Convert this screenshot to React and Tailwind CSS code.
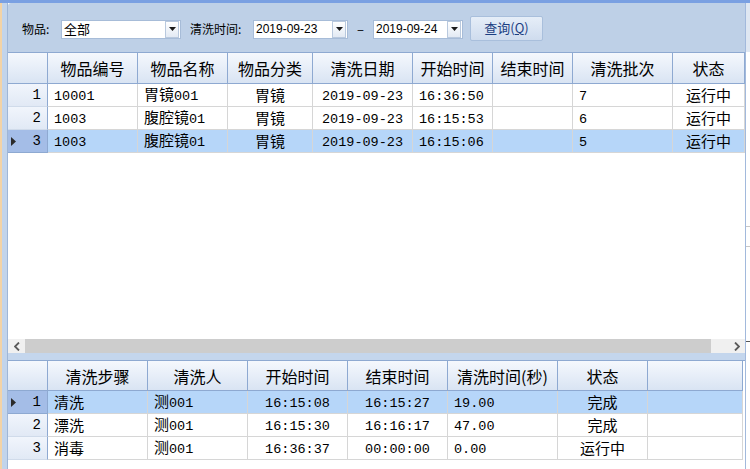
import React from "react";

function Mixed({ s }) {
  const parts = s.match(/[\u0000-\u00ff]+|[^\u0000-\u00ff]+/g) || [];
  return (
    <span className="whitespace-nowrap">
      {parts.map((p, i) =>
        /^[\u0000-\u00ff]/.test(p) ? (
          <span key={i} className="font-['Liberation_Mono',monospace] text-[13.5px]">
            {p}
          </span>
        ) : (
          <span key={i}>{p}</span>
        )
      )}
    </span>
  );
}

function DropBtn() {
  return (
    <div className="w-[14px] h-[17px] my-[1px] mr-[1px] flex items-center justify-center border border-[#b9c9de] bg-gradient-to-b from-[#ffffff] to-[#e3eaf4]">
      <svg width="7" height="4" viewBox="0 0 7 4">
        <path d="M0 0 H7 L3.5 4 Z" fill="#1a1a1a" />
      </svg>
    </div>
  );
}

function Combo({ w, text, textCls }) {
  return (
    <div className={`${w} h-[19px] bg-white border border-[#a7bcd8] flex items-center justify-between`}>
      <span className={`pl-[2px] text-black ${textCls}`}>{text}</span>
      <DropBtn />
    </div>
  );
}

function Indicator({ n, sel }) {
  return (
    <div
      className={`relative h-[23px] flex items-center justify-end pr-[6px] border-r border-r-[#8ea9d1] border-b ${
        sel
          ? "bg-[#a4bde7] border-b-[#8ea9d1]"
          : "bg-gradient-to-b from-[#f1f5fc] to-[#e1e9f5] border-b-[#d0dbea]"
      }`}
    >
      {sel && (
        <svg className="absolute left-[3px] top-[7px]" width="5" height="9" viewBox="0 0 5 9">
          <path d="M0 0 L5 4.5 L0 9 Z" fill="#2b2b2b" />
        </svg>
      )}
      <span className="font-['Liberation_Mono',monospace] text-[14px] text-black">{n}</span>
    </div>
  );
}

function DataCell({ v, align, sel }) {
  return (
    <div
      className={`h-[23px] flex items-center border-r border-b border-[#d6d6d6] text-[15px] text-black whitespace-nowrap overflow-hidden ${
        align === "c" ? "justify-center" : "justify-start pl-[6px]"
      } ${sel ? "bg-[#b6d6f9]" : "bg-white"}`}
    >
      <Mixed s={v} />
    </div>
  );
}

function HeadCell({ t, first }) {
  return (
    <div className="h-full flex items-center justify-center border-r border-b border-[#8ea9d1] bg-gradient-to-b from-[#f5f8fd] to-[#d9e4f3] text-[16px] text-black whitespace-nowrap">
      {first ? "" : t}
    </div>
  );
}

const topHeads = ["", "物品编号", "物品名称", "物品分类", "清洗日期", "开始时间", "结束时间", "清洗批次", "状态"];
const topAlign = ["l", "l", "c", "c", "l", "l", "l", "c"];
const topRows = [
  ["10001", "胃镜001", "胃镜", "2019-09-23", "16:36:50", "", "7", "运行中"],
  ["1003", "腹腔镜01", "胃镜", "2019-09-23", "16:15:53", "", "6", "运行中"],
  ["1003", "腹腔镜01", "胃镜", "2019-09-23", "16:15:06", "", "5", "运行中"],
];

const botHeads = ["", "清洗步骤", "清洗人", "开始时间", "结束时间", "清洗时间(秒)", "状态", ""];
const botAlign = ["l", "l", "c", "c", "l", "c", "l"];
const botRows = [
  ["清洗", "测001", "16:15:08", "16:15:27", "19.00", "完成", ""],
  ["漂洗", "测001", "16:15:30", "16:16:17", "47.00", "完成", ""],
  ["消毒", "测001", "16:36:37", "00:00:00", "0.00", "运行中", ""],
];

export default function App() {
  return (
    <div className="w-[750px] h-[469px] overflow-hidden bg-white flex flex-col font-['Noto_Sans_CJK_SC','Noto_Sans',sans-serif]">
      <div className="h-[3px] bg-[#7aa0e2] shrink-0" />
      <div className="flex flex-1 min-h-0">
        <div className="w-[2px] bg-[#f3d3a6]" />
        <div className="w-[5px] bg-[#c2d4eb]" />
        <div className="w-[1px] bg-[#9fb6d6]" />
        <div className="w-[737px] flex flex-col">
          <div className="h-[49px] shrink-0 bg-[#bed0e7] rounded-tl-[3px] flex items-center pl-[14px] pt-[3px] text-[12px] text-black">
            <span className="w-[39px]">物品:</span>
            <Combo w="w-[120px]" text="全部" textCls="text-[13px]" />
            <span className="ml-[9px] w-[63px]">清洗时间:</span>
            <Combo w="w-[95px]" text="2019-09-23" textCls="text-[12px] font-['Liberation_Sans',sans-serif]" />
            <span className="w-[25px] text-center text-[13px]">–</span>
            <Combo w="w-[90px]" text="2019-09-24" textCls="text-[12px] font-['Liberation_Sans',sans-serif]" />
            <button className="ml-[7px] w-[73px] h-[25px] -mt-[2px] rounded-[2px] border border-[#a9bfdc] bg-gradient-to-b from-[#e6eef8] to-[#cfdcee] text-[13px] text-[#1c3f82]">
              查询(<span className="underline">Q</span>)
            </button>
          </div>

          <div className="h-[287px] shrink-0 flex flex-col border-t border-[#8ea9d1] bg-white">
            <div className="h-[31px] grid grid-cols-[40px_90px_90px_85px_100px_80px_80px_100px_72px]">
              {topHeads.map((h, i) => (
                <HeadCell key={i} t={h} first={i === 0} />
              ))}
            </div>
            {topRows.map((r, ri) => (
              <div key={ri} className="grid grid-cols-[40px_90px_90px_85px_100px_80px_80px_100px_72px]">
                <Indicator n={ri + 1} sel={ri === 2} />
                {r.map((v, ci) => (
                  <DataCell key={ci} v={v} align={topAlign[ci]} sel={ri === 2} />
                ))}
              </div>
            ))}
            <div className="flex-1 bg-white" />
          </div>

          <div className="h-[14px] shrink-0 flex bg-[#f0f0f0]">
            <div className="w-[17px] flex items-center justify-center">
              <svg width="6" height="9" viewBox="0 0 6 9">
                <path d="M5 0.5 L1 4.5 L5 8.5" stroke="#5a5a5a" strokeWidth="1.8" fill="none" />
              </svg>
            </div>
            <div className="w-[686px] bg-[#cdcdcd]" />
            <div className="flex-1 flex items-center justify-end pr-[5px]">
              <svg width="6" height="9" viewBox="0 0 6 9">
                <path d="M1 0.5 L5 4.5 L1 8.5" stroke="#5a5a5a" strokeWidth="1.8" fill="none" />
              </svg>
            </div>
          </div>

          <div className="h-[7px] shrink-0 bg-[#c4d6ed]" />

          <div className="flex-1 flex flex-col border-t border-[#8ea9d1] bg-white">
            <div className="h-[30px] grid grid-cols-[40px_100px_100px_100px_100px_110px_90px_95px]">
              {botHeads.map((h, i) => (
                <HeadCell key={i} t={h} first={i === 0} />
              ))}
            </div>
            {botRows.map((r, ri) => (
              <div key={ri} className="grid grid-cols-[40px_100px_100px_100px_100px_110px_90px_95px]">
                <Indicator n={ri + 1} sel={ri === 0} />
                {r.map((v, ci) => (
                  <DataCell key={ci} v={v} align={botAlign[ci]} sel={ri === 0} />
                ))}
              </div>
            ))}
          </div>
        </div>
        <div className="w-[5px] flex flex-col border-l border-[#a2b9dc] bg-white">
          <div className="h-[49px] bg-[#dfe7f2]" />
          <div className="h-[174px]" />
          <div className="h-[1px] bg-[#c8c8c8]" />
          <div className="h-[19px]" />
          <div className="h-[1px] bg-[#c8c8c8]" />
          <div className="h-[94px]" />
          <div className="h-[1px] bg-[#555]" />
        </div>
      </div>
    </div>
  );
}
